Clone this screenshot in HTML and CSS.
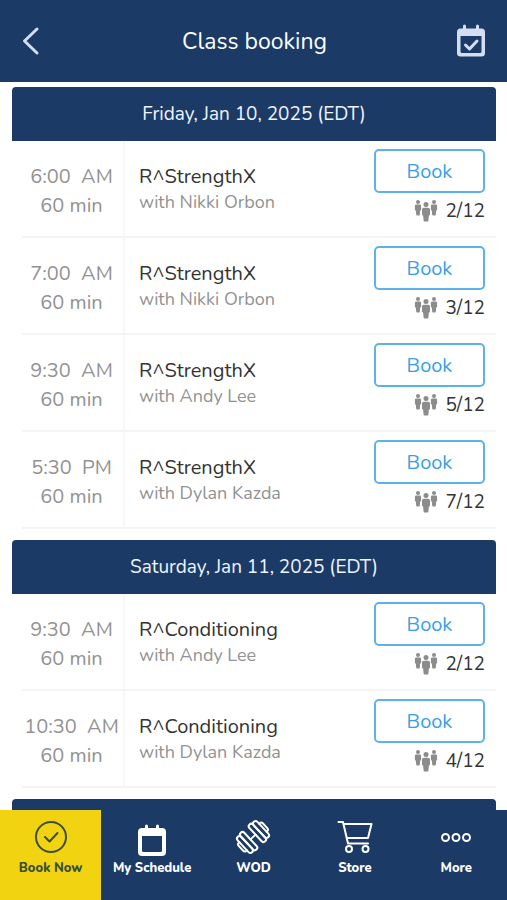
FILE: index.html
```html
<!DOCTYPE html>
<html lang="en">
<head>
<meta charset="utf-8">
<meta name="viewport" content="width=device-width, initial-scale=1">
<title>Class booking</title>
<link rel="stylesheet" href="styles.css">
</head>
<body>
<svg class="sprite" aria-hidden="true">
  <symbol id="people" viewBox="0 0 24 24">
    <g id="person">
      <circle cx="4" cy="3" r="2"/>
      <path d="M2.200 5.500h3.600q1.300 0 1.300 1.300v4q0 .7-.9.7l-.4 4q-.1.900-.8.900H3q-.7 0-.8-.9l-.4-4q-.9 0-.9-.7v-4q0-1.300 1.300-1.300z"/>
    </g>
    <use href="#person" x="16"/>
    <circle cx="12" cy="5.500" r="2.500"/>
    <path d="M9.800 8.700h4.400q1.800 0 1.800 1.800v5q0 .9-1.100.9l-.5 5q-.1 1.200-1.100 1.200h-2.600q-1 0-1.100-1.200l-.5-5q-1.100 0-1.100-.9v-5q0-1.800 1.800-1.800z"/>
  </symbol>
</svg>
<header class="topbar">
  <button class="icon-button" type="button" aria-label="Back">
    <svg width="18" height="30" viewBox="0 0 18 30"><path class="line back" d="M15 3 2.500 15 15 27"/></svg>
  </button>
  <h1>Class booking</h1>
  <button class="icon-button" type="button" aria-label="Calendar">
    <svg width="30" height="34" viewBox="0 0 30 34">
      <path fill="currentColor" fill-rule="evenodd" d="M4.500 4.500H7V2q0-1.500 1.500-1.500T10 2v2.500h10V2q0-1.500 1.500-1.500T23 2v2.500h2.500q3.500 0 3.500 3.500v21q0 3.500-3.500 3.500h-21Q1 32.500 1 29V8q0-3.500 3.500-3.500zM4.500 12v15.500q0 1.500 1.500 1.500h18q1.500 0 1.500-1.500V12z"/>
      <path class="line check" d="m9.500 21 4 4 7.500-8"/>
    </svg>
  </button>
</header>
<main class="schedule">
  <section class="day">
    <h2>Friday, Jan 10, 2025 (EDT)</h2>
    <ul>
      <li class="slot">
        <div class="when"><span>6:00&nbsp; AM</span><span>60 min</span></div>
        <div class="what"><h3>R^StrengthX</h3><p>with Nikki Orbon</p></div>
        <div class="action"><button class="book" type="button">Book</button><div class="count"><svg><use href="#people"/></svg>2/12</div></div>
      </li>
      <li class="slot">
        <div class="when"><span>7:00&nbsp; AM</span><span>60 min</span></div>
        <div class="what"><h3>R^StrengthX</h3><p>with Nikki Orbon</p></div>
        <div class="action"><button class="book" type="button">Book</button><div class="count"><svg><use href="#people"/></svg>3/12</div></div>
      </li>
      <li class="slot">
        <div class="when"><span>9:30&nbsp; AM</span><span>60 min</span></div>
        <div class="what"><h3>R^StrengthX</h3><p>with Andy Lee</p></div>
        <div class="action"><button class="book" type="button">Book</button><div class="count"><svg><use href="#people"/></svg>5/12</div></div>
      </li>
      <li class="slot">
        <div class="when"><span>5:30&nbsp; PM</span><span>60 min</span></div>
        <div class="what"><h3>R^StrengthX</h3><p>with Dylan Kazda</p></div>
        <div class="action"><button class="book" type="button">Book</button><div class="count"><svg><use href="#people"/></svg>7/12</div></div>
      </li>
    </ul>
  </section>
  <section class="day">
    <h2>Saturday, Jan 11, 2025 (EDT)</h2>
    <ul>
      <li class="slot">
        <div class="when"><span>9:30&nbsp; AM</span><span>60 min</span></div>
        <div class="what"><h3>R^Conditioning</h3><p>with Andy Lee</p></div>
        <div class="action"><button class="book" type="button">Book</button><div class="count"><svg><use href="#people"/></svg>2/12</div></div>
      </li>
      <li class="slot">
        <div class="when"><span>10:30&nbsp; AM</span><span>60 min</span></div>
        <div class="what"><h3>R^Conditioning</h3><p>with Dylan Kazda</p></div>
        <div class="action"><button class="book" type="button">Book</button><div class="count"><svg><use href="#people"/></svg>4/12</div></div>
      </li>
    </ul>
  </section>
  <section class="day"><div class="day-bar"></div></section>
</main>
<nav class="tabs">
  <a class="tab active" href="#book">
    <svg viewBox="0 0 36 36"><circle class="line" cx="18" cy="18" r="15"/><path class="line" d="m12 18 4.500 4.500 8-8.500"/></svg>
    Book Now
  </a>
  <a class="tab" href="#schedule">
    <svg viewBox="0 0 36 36"><path fill="currentColor" fill-rule="evenodd" d="M8 9h3V7q0-1.500 1.500-1.500T14 7v2h8V7q0-1.500 1.500-1.500T25 7v2h3q4 0 4 4v20q0 4-4 4H8q-4 0-4-4V13q0-4 4-4zm0 8v14.500Q8 33 9.500 33h17q1.500 0 1.500-1.500V17z"/></svg>
    My Schedule
  </a>
  <a class="tab" href="#wod">
    <svg viewBox="0 0 36 36"><g class="line" transform="rotate(-43 18 18)"><path d="M14.500 18h7"/><rect x="9.500" y="6.500" width="5" height="23" rx="2.500"/><rect x="4.500" y="7.500" width="5" height="21" rx="2.500"/><path d="M4.500 12.500H3.500Q1.500 12.500 1.500 15v6q0 2.500 2 2.500h1"/><rect x="21.500" y="6.500" width="5" height="23" rx="2.500"/><rect x="26.500" y="7.500" width="5" height="21" rx="2.500"/><path d="M31.500 12.500h1q2 0 2 2.500v6q0 2.500-2 2.500h-1"/></g></svg>
    WOD
  </a>
  <a class="tab" href="#store">
    <svg viewBox="0 0 36 36"><g class="line"><path d="M1.500 3h4.500l5 21.500h20M7 5h27.500L31 19H9.500"/><circle cx="12" cy="30" r="3"/><circle cx="28.500" cy="30" r="3"/></g></svg>
    Store
  </a>
  <a class="tab" href="#more">
    <svg viewBox="0 0 36 36"><g class="line"><circle cx="7.500" cy="18.500" r="3.500"/><circle cx="18" cy="18.500" r="3.500"/><circle cx="28.500" cy="18.500" r="3.500"/></g></svg>
    More
  </a>
</nav>
</body>
</html>
```
FILE: styles.css
```css
* { box-sizing: border-box; }

body {
  display: flex;
  flex-direction: column;
  height: 100vh;
  margin: 0;
  overflow: hidden;
  background: #fff;
  color: #333;
  font-family: Nunito, Lato, sans-serif;
  font-size: 19px;
}

h1, h2, h3, p, ul { margin: 0; padding: 0; font-weight: 400; }
ul { list-style: none; }
button { font: inherit; cursor: pointer; }
.sprite { position: absolute; width: 0; height: 0; }

.line {
  fill: none;
  stroke: currentColor;
  stroke-width: 2;
  stroke-linecap: round;
  stroke-linejoin: round;
}
.back, .check { stroke-width: 3; }

.topbar {
  display: flex;
  flex: none;
  align-items: center;
  justify-content: space-between;
  height: 82px;
  padding: 2px 20px 0 22px;
  background: #1b3b66;
  color: #fff;
}
.topbar h1 { font-size: 23px; line-height: 32px; }
.icon-button {
  display: flex;
  align-items: center;
  justify-content: center;
  width: 32px;
  height: 42px;
  padding: 0 0 2px;
  border: 0;
  background: none;
  color: #d5def0;
}
.icon-button:first-child { justify-content: flex-start; }

.schedule {
  display: flex;
  flex: 1;
  flex-direction: column;
  gap: 11px;
  min-height: 0;
  padding: 5px 11px 0 12px;
  overflow: hidden;
}
.day { flex: none; }
.day h2, .day-bar {
  height: 54px;
  border-radius: 4px 4px 0 0;
  background: #1b3b66;
  color: #f0f5ff;
  font-size: 19px;
  line-height: 54px;
  text-align: center;
}

.slot {
  display: flex;
  height: 97px;
  margin-left: 10px;
  border-bottom: 2px solid #f3f4f5;
}
.when {
  display: flex;
  flex: none;
  flex-direction: column;
  width: 103px;
  padding: 21px 2px 0 0;
  border-right: 2px solid #f6f7f8;
  color: #929292;
  font-size: 20px;
  line-height: 29px;
  text-align: center;
  white-space: nowrap;
}
.what {
  flex: 1;
  min-width: 0;
  padding: 23px 0 0 14px;
}
.what h3 { font-size: 20px; line-height: 26px; }
.what p { color: #929292; font-size: 18px; line-height: 25px; }

.action { flex: none; width: 122px; padding: 8px 11px 0 0; }
.book {
  display: block;
  width: 100%;
  height: 44px;
  padding: 0;
  border: 2px solid #5db2ec;
  border-radius: 5px;
  background: #fff;
  color: #3a9fe5;
  font-size: 20px;
}
.count {
  display: flex;
  align-items: center;
  justify-content: flex-end;
  gap: 7px;
  height: 36px;
  line-height: 36px;
}
.count svg { width: 24px; height: 24px; fill: #8c8c8c; }

.tabs {
  display: grid;
  flex: none;
  grid-template-columns: repeat(5, 1fr);
  height: 90px;
  background: #1b3b66;
}
.tab {
  display: flex;
  flex-direction: column;
  align-items: center;
  gap: 4px;
  padding-top: 9px;
  color: #fff;
  font-size: 13px;
  font-weight: 800;
  line-height: 18px;
  text-decoration: none;
  white-space: nowrap;
}
.tab svg { width: 36px; height: 36px; overflow: visible; }
.tab.active { background: #f2d312; color: #374f36; }
```
